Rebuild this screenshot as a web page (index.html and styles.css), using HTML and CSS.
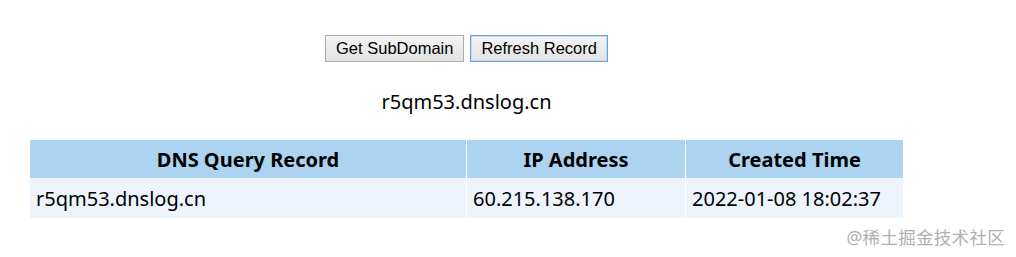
FILE: index.html
```html
<html>
<head>
  <title>DNSLog</title>
  <link rel="stylesheet" href="styles.css">
</head>
<body>
  <div class="wrap">
    <div class="actions">
      <button class="btn">Get SubDomain</button>
      <button class="btn focused">Refresh Record</button>
    </div>
    <p class="domain">r5qm53.dnslog.cn</p>
    <table class="records">
      <thead>
        <tr>
          <th class="col-domain">DNS Query Record</th>
          <th class="col-ip">IP Address</th>
          <th class="col-time">Created Time</th>
        </tr>
      </thead>
      <tbody>
        <tr>
          <td>r5qm53.dnslog.cn</td>
          <td>60.215.138.170</td>
          <td>2022-01-08 18:02:37</td>
        </tr>
      </tbody>
    </table>
  </div>
  <div class="watermark">@稀土掘金技术社区</div>
</body>
</html>
```

FILE: styles.css
```css
body {
  margin: 0;
  background: #ffffff;
  font-family: "Noto Sans", "Noto Sans CJK SC", sans-serif;
  color: #000;
}

.wrap {
  width: 875px;
  margin-left: 29px;
  padding-top: 35px;
}

.actions {
  display: flex;
  justify-content: center;
  gap: 6px;
}

.btn {
  font-family: "Liberation Sans", Arial, sans-serif;
  font-size: 16.5px;
  height: 27px;
  padding: 0 10px;
  background: linear-gradient(#f4f4f4, #e2e2e2);
  border: 1px solid #adadad;
  border-radius: 0;
  color: #000;
}

.btn.focused {
  border-color: #6f9ee0;
  box-shadow: 0 0 0 1px #c4daf3 inset;
}

.domain {
  text-align: center;
  font-size: 20px;
  margin: 25px 0 0;
  line-height: 30px;
}

.records {
  width: 100%;
  margin-top: 23px;
  border-collapse: separate;
  border-spacing: 1px 0;
  font-size: 20px;
}

.records th {
  background: #acd4f0;
  height: 38px;
  font-weight: bold;
  text-align: center;
  padding: 0;
}

.col-domain { width: 436px; }
.col-ip { width: 218px; }

.records td {
  background: #eef4fd;
  height: 40px;
  padding: 0 6px;
  text-align: left;
}

.watermark {
  position: absolute;
  right: 11px;
  top: 224px;
  font-size: 17.5px;
  color: #b0b0b0;
  letter-spacing: 0.3px;
}
```
